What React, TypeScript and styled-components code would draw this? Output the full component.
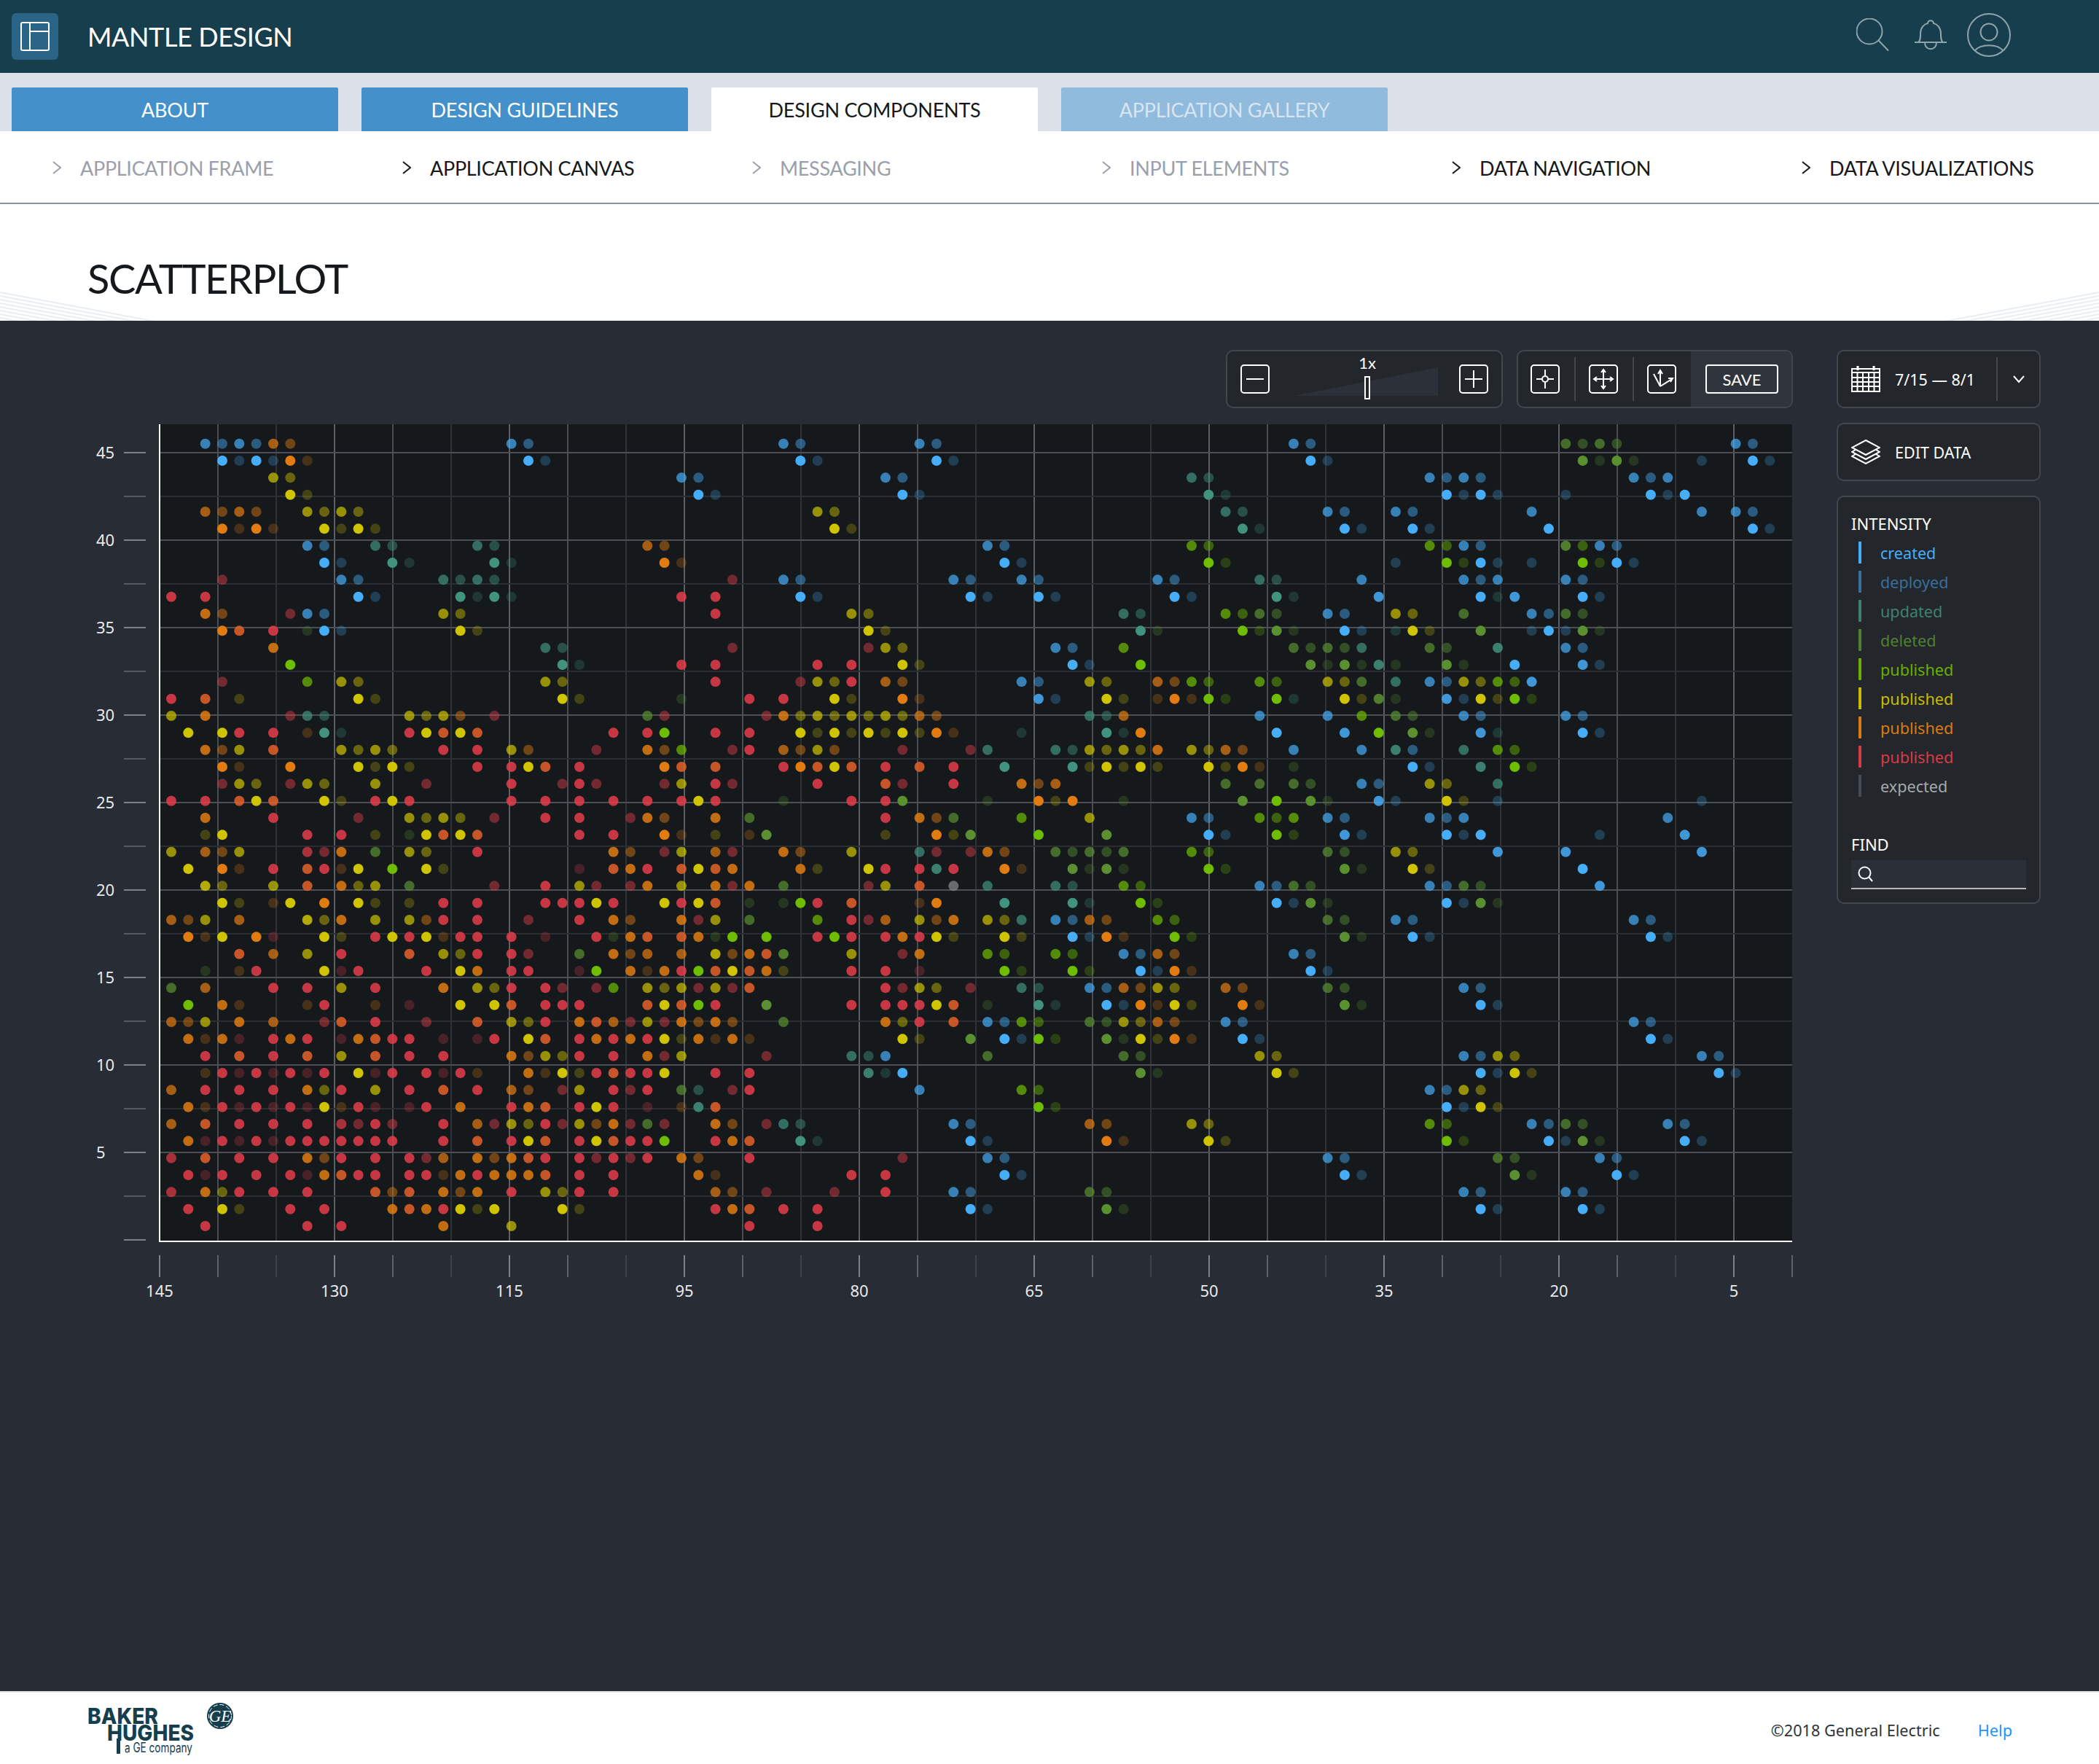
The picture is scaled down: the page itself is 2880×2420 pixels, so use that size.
import * as React from 'react'
import styled, { createGlobalStyle } from 'styled-components'

const FONT = `Lato, 'Noto Sans', sans-serif`
const BODY_FONT = `'Noto Sans', 'Open Sans', sans-serif`

const GlobalStyle = createGlobalStyle`
  html, body { margin: 0; padding: 0; background: #fff; }
  * { box-sizing: border-box; }
`

const Page = styled.div`
  width: 2880px;
  height: 2420px;
  display: flex;
  flex-direction: column;
  font-family: ${FONT};
`

const Header = styled.header`
  height: 100px;
  flex: none;
  display: flex;
  align-items: center;
  padding: 0 121px 0 16px;
  background: #163e4d;
`

const LogoBox = styled.div`
  width: 64px;
  height: 64px;
  border-radius: 6px;
  background: #2a6587;
  display: flex;
  align-items: center;
  justify-content: center;
`

const AppTitle = styled.h1`
  margin: 0 0 0 40px;
  font-size: 36px;
  font-weight: 400;
  letter-spacing: -0.4px;
  color: #fff;
`

const HeaderIcons = styled.div`
  margin-left: auto;
  margin-bottom: 4px;
  display: flex;
  align-items: center;
`

const HeaderIcon = styled.svg<{ $left: number }>`
  display: block;
  margin-left: ${p => p.$left}px;
  fill: none;
  stroke: #8fa4ab;
  stroke-width: 2;
`

const TabBar = styled.nav`
  height: 80px;
  flex: none;
  display: flex;
  align-items: flex-end;
  gap: 32px;
  padding-left: 16px;
  background: #dce0e8;
`

const Tab = styled.div<{ $kind: 'normal' | 'active' | 'muted' }>`
  width: 448px;
  height: 60px;
  border-radius: 2px 2px 0 0;
  display: flex;
  align-items: center;
  justify-content: center;
  font-size: 27px;
  letter-spacing: -0.25px;
  background: ${p => (p.$kind === 'active' ? '#fff' : p.$kind === 'muted' ? '#90bbdd' : '#4390ca')};
  color: ${p => (p.$kind === 'active' ? '#15191c' : p.$kind === 'muted' ? '#d6e5f1' : '#fff')};
`

const SubNav = styled.div`
  height: 100px;
  flex: none;
  display: grid;
  grid-template-columns: repeat(6, 480px);
  border-bottom: 2px solid #8d929c;
  background: #fff;
`

const SubNavItem = styled.div<{ $on: boolean }>`
  display: flex;
  align-items: center;
  padding: 2px 0 0 72px;
  font-size: 27px;
  letter-spacing: -0.3px;
  color: ${p => (p.$on ? '#15191c' : '#9aa0ab')};
`

const Chevron = styled.svg`
  flex: none;
  margin-right: 26px;
  fill: none;
  stroke: currentColor;
  stroke-width: 2;
`

const TitleBar = styled.div`
  position: relative;
  height: 160px;
  flex: none;
  padding: 60px 0 0 120px;
  background: #fff;
  overflow: hidden;
`

const PageTitle = styled.h2`
  margin: 0;
  font-size: 56px;
  line-height: 84px;
  font-weight: 400;
  letter-spacing: -1.36px;
  color: #15191c;
`

const Fan = styled.svg<{ $flip?: boolean }>`
  position: absolute;
  bottom: 0;
  ${p => (p.$flip ? 'right: 0; transform: scaleX(-1);' : 'left: 0;')}
  stroke: #e9edf3;
  stroke-width: 2;
`

const Main = styled.main`
  flex: 1;
  display: flex;
  gap: 60px;
  padding: 40px 0 0 120px;
  background: #282c35;
`

const ChartColumn = styled.div`
  width: 2340px;
  flex: none;
`

const Toolbar = styled.div`
  height: 80px;
  display: flex;
  justify-content: flex-end;
  gap: 19px;
`

const Panel = styled.div`
  border: 2px solid #42464f;
  border-radius: 10px;
  background: #23272b;
`

const ZoomPanel = styled(Panel)`
  width: 380px;
  display: flex;
  align-items: center;
  padding: 0 18px;
`

const SquareButton = styled.div`
  width: 40px;
  height: 40px;
  flex: none;
  border: 2px solid #fff;
  border-radius: 5px;
  display: flex;
  align-items: center;
  justify-content: center;
`

const ButtonIcon = styled.svg`
  display: block;
  fill: none;
  stroke: #fff;
  stroke-width: 2;
`

const SliderBox = styled.div`
  position: relative;
  flex: 1;
  height: 76px;
`

const SliderWedge = styled.div`
  position: absolute;
  left: 33px;
  top: 22px;
  width: 198px;
  height: 39px;
  background: #2c3039;
  clip-path: polygon(0 100%, 100% 0, 100% 100%);
`

const SliderHandle = styled.div`
  position: absolute;
  left: 130px;
  top: 34px;
  width: 8px;
  height: 32px;
  border: 2px solid #fff;
  background: #23272b;
`

const SliderLabel = styled.span`
  position: absolute;
  left: 114px;
  top: 2px;
  width: 40px;
  text-align: center;
  font-size: 22px;
  line-height: 28px;
  color: #fff;
`

const ToolPanel = styled(Panel)`
  width: 379px;
  display: flex;
  overflow: hidden;
`

const ToolGroup = styled.div`
  display: flex;
  align-items: center;
  padding-left: 17px;
  width: 237px;
  flex: none;
`

const ToolDivider = styled.div`
  width: 2px;
  height: 60px;
  margin: 0 18px 0 20px;
  background: #42464f;
`

const SaveArea = styled.div`
  flex: 1;
  display: flex;
  align-items: center;
  padding-left: 20px;
  background: #30343c;
`

const SaveButton = styled.div`
  width: 100px;
  height: 40px;
  border: 2px solid #fff;
  border-radius: 4px;
  display: flex;
  align-items: center;
  justify-content: center;
  font-size: 22px;
  color: #fff;
`

const ChartSvg = styled.svg`
  display: block;
  margin-top: 22px;
  overflow: visible;
`

const AxisLabel = styled.text`
  font-family: ${BODY_FONT};
  font-size: 22px;
  fill: #e8eaec;
`

const SideColumn = styled.aside`
  width: 280px;
  flex: none;
  display: flex;
  flex-direction: column;
  gap: 20px;
`

const ActionPanel = styled(Panel)`
  height: 80px;
  display: flex;
  align-items: center;
  padding-left: 18px;
  font-family: ${BODY_FONT};
  font-size: 21.5px;
  color: #fff;
`

const ActionText = styled.span`
  margin-left: 20px;
`

const DateDivider = styled.div`
  width: 2px;
  height: 60px;
  margin-left: auto;
  background: #42464f;
`

const DateCaret = styled.div`
  width: 57px;
  display: flex;
  justify-content: center;
`

const IntensityPanel = styled(Panel)`
  padding: 21px 18px 18px;
  font-family: ${BODY_FONT};
`

const SectionLabel = styled.div`
  font-size: 22px;
  line-height: 30px;
  color: #fff;
`

const LegendList = styled.div`
  margin-top: 10px;
  display: flex;
  flex-direction: column;
  gap: 10px;
  padding-left: 10px;
`

const LegendRow = styled.div<{ $color: string; $text: string }>`
  height: 30px;
  display: flex;
  align-items: center;
  font-size: 21.6px;
  color: ${p => p.$text};
  &::before {
    content: '';
    width: 4px;
    height: 30px;
    margin-right: 26px;
    background: ${p => p.$color};
  }
`

const FindLabel = styled(SectionLabel)`
  margin-top: 50px;
`

const FindInput = styled.div`
  margin-top: 7px;
  height: 40px;
  padding-left: 9px;
  display: flex;
  align-items: center;
  background: #2b2f38;
  border-bottom: 2px solid #b5b7bb;
`

const Footer = styled.footer`
  height: 100px;
  flex: none;
  display: flex;
  align-items: center;
  justify-content: space-between;
  padding: 4px 119px 0 120px;
  border-top: 2px solid #dfe3e6;
  background: #fff;
  font-family: ${BODY_FONT};
  font-size: 21.7px;
  color: #2f343b;
`

const FooterLinks = styled.div`
  display: flex;
  gap: 52px;
`

const HelpLink = styled.a`
  color: #1e96f0;
`

const LogoText = styled.text<{ $size: number; $weight: number }>`
  font-family: Inter, 'Open Sans', sans-serif;
  font-size: ${p => p.$size}px;
  font-weight: ${p => p.$weight};
  fill: #163e4d;
`

const GEText = styled.text`
  font-family: 'Liberation Serif', serif;
  font-style: italic;
  font-size: 23px;
  fill: #fff;
`

// one dot per token: column + colour letter, lowercase takes its alpha from the row/col parity
const DOT_ROWS = [
  '2b3b4b5b6o7o 20b21b 36b37b 44b45b 66b67b 82g83g84g85g 92b93b',
  '3b4b5b6b7o8o 21b22b 37b38b 45b46b 67b68b 83g84g85g86g 90b 93b94b',
  '6y7y 30b31b 42b43b 60t61t 74b75b76b77b 86b87b88b',
  '7y8y 31b32b 43b44b 61t62t 75b76b77b78b 82b 87b88b89b',
  '2o3o4o5o 8y9y10y11y 38y39y 62t63t 68b69b 72b73b 80b 90b 92b93b',
  '3o4o5o6o 9y10y11y12y 39y40y 63t64t 69b70b 73b74b 81b 93b94b',
  '8b9b 12t13t 18t19t 28o29o 48b49b 60l61l 74l75l 76b77b 82G83l 84b85b',
  '9b10b 13t14t 19t20t 29o30o 49b50b 61l62l 72b 75l76l 77b78b 80b 83l84l 85b86b',
  '3r 10b11b 16t17t18t19t 33r 36b37b 46b47b 50b51b 58b59b 64t65t 70b 76b77b78b 82b83b',
  '0R 2R 11b12b 17t18t19t20t 30R 32R 37b38b 47b 48b 51b52b 59b60b 65t66t 71B 77b78t79B 83b84b',
  '2O3o 7r 8b9b 16y17y 32R 40y41y 56t57t 62l63l 64g65g 68b69b 72y73y 76g 80b81b 82g83g',
  '3o4E6R 8g9b10b 17y18y 41y42y 57t58g 63l64l 65g66g 69b70b 72t 73y74y 77g 80b81b 82b83g84g',
  '6O 22t23t 33r 41r42y43y 52b53b 56l 66g67g68g69g 70t 74g75g 78T 82b83b',
  '7l 23t24t 30R32R 38R40R 43y44y 53b54b 57l 67g68g69g70g71T 72g 75g76g 79b 83B84b',
  '3r 8l 10y11y 22y23y 32R 37r 38y39y 40R 42o43o 50b51b 54y55y 58o59o 60l61l 64l65l 68y69y 70g 72t 74b75b 76y77y 78l79l 80B',
  '0R 2E 4y 11y12y 23y24y 30g 34R 36R 39y40y 43o44o 51B52b 55y56y 58o59o60o 61l62l 65l66t 69y70y 71G72g 75B76b 77y78y 79l80l',
  '0y 2O 7r 8t9t 14y15y16y17o 19r 28g29r 35r36O37y38y39y40y41y42y43y44o45o 54t55t56o 64b 68b 70l 72g73g 76b77b 82b83b',
  '1y 3y 4R 6R 8o 9t10t 14R15y16E17y18E 26R 28R29l 32R 34R 37y38y39y40y41y42y43y44y45o46o 50t 55t56t57o 65b 69B 71l 73g74g 77B78t 83b84b',
  '2O3o4y 6E 10y11y12y13y 16R 18R 20y21o 25r 28O29o30l 33r34R 36o37o38y39o 43r 47r 48t 52t53t 54y55y56y57y58O 60y61y62o63o 66b 70b 72T73b 76t 78l79l',
  '3o4o 7o 11y12y13y14y 18R 20R21y22E 24R 29o30E 32E 36R37o38E39y40E 42R 44E 46R 49t 53t54y 55y56y57y58y 61y62y63o64o 66g 73b74b 77T 79l80l',
  '3r4y5y 7r8y9y 12y 15r 20R 23r24R25r 29r30y 32R33r 38R 42E43r 46R 50O51o52o 62g 64g 66g67g 70b71b 74y75y 78t',
  '0R 2R 4E5y6E 9y10y 12R13y14R 20R 22R 24R 26R 28R 30R31y32R 36g 40R 42R43g 48g 51o52y53o 56g 63g 65l 67g68g 71B72b 75y76y 78b 90b',
  '2O 6R 11r 14y15y16y17y 19r 22R 24R 27r28O29o 32O 34g 42R 44O45o46g 50l 54y 60b61b 64l65l66l 68b69b 74b75b76b 88b',
  '2y3y 8R 10R 12y 14g15y16E17y18E 24R 26R 29o30o 32y 34o35g 42y 45o46y47g 51l 55g 61b62b 65l66l 69B70b 75b76b77b 84b 89B',
  '0y 2o3o4y 8r9r10O 12g 14y15y 18R 26O27o 29r30y 32o33r 36O37o 40y 44t45r 47r 48O49o 52g53g54g55g56g 60l61l 68g69g 72y73y 78B 82B 90B',
  '1y 3o4o 6R 8E9R10o11y 13l 15y16y 24r 26E27O28R 30E31y32E33O 37O38y 41y42R 44R45T46R 49o50o 53g54g55g56g 61l62l 69g70g 73y74y 83b',
  '2Y3y 6y 8E 10O11y12y 14g 19r 22R 24y25r 27r28O 30y 32O33r34O 36g 41r42y 44E 46x 48t 52t53t 56l57l 64b65b66g67g 74b75b76g77g 84B',
  '3y4y 6o7y 9o 11y12y 14y 16R 18R 22R23R24R25y26R 29y30R31y32E 34g 36g37l38R 40E 44o45o 49t 53t54t 57l58l 65b66b67g68g 75b76b77g78g',
  '0o1o2y 4o 8Y9y10O 12y 14y15o16R 18R 21r 24R 26O27o 30O31r32y 34g 38l 40R41r42o 44y45o46O 48y49y50t 52b53b54o55o 58l59l 68g69g 72b73b 86b87b',
  '1o2o3y 5o6r 9y10y 12R13y14R15y16o17R18R 20R 22r 25R26g27O28E 30E31O32g33l 35l 38R39l40R 42R43O44R45y46y 49y50y 53b54b55o56o 59l60l 69g70g 73b74b 87b88b',
  '4E 6o 8y 10R 14E 16y17y18R 20R21r 24g 26O27o28o 30o 32Y33o34O35E36G 40y 43r44O 48l49l 52l53l 56b57b58o59o 66b67b',
  '2g 4o5R 9y10r11R 15R 17y18O 20R21R 24r25l 27O28o29O30R31l32E33y34E35O36y 40R 42R 44r 49l50l 53l54l 57b58b59o60o 67b68b',
  '0g 2o 6R 8R 10y 12R 16O 18y19y20R 22R23r 25r26l 28y29y30y31r32y33r34E 42R43r44y45y 47r 50t51t 54b55b56o57o58y59y 62o63o 68g69g 76b77b',
  '1l 3O4o 8o9R 12o 14r 17y 19y20E 22R23R24R 28E29y30E31l32R 35g 40R 42R43R44R45y46E 48g 51t52t 55b56b57o58o59y60y 63o64o 69g70g 77b78b',
  '0o1o2y 4O 6o 9r10E 12R 15r 18E 20y21y22R 24O25E26o27r28y29r30O31o32O33o 36g 42O43y44R 46E 48b49b50l51l 54g55g56y57y58o59o 62b63b 86b87b',
  '1O2o3O4r 6R7O8R 10r11O12E13R14R 16r 18r19R 21y22E 24R25O26R27O28R29y30y31O32o33O34o 43y44y 47g 49b50b51l52l 55g56g57y58y59o60o 63b64b 87b88b',
  '2R 4E 6R 8E 10y 12E 14R 16R 20O21o22y23y24R 26R 28O29r30y 35r 40t41t42b 48g 56g57g 64y65y 76b77b78y79y 90b91b',
  '2o3R4r5R6r7R8r9R 11y12r13R 15R16r17R18o 21O22o23y24y25R26E27R28R29y 32R 34R 41T42t43b 57g58g 65y66y 77b78b79y80y 91b92b',
  '0o 2R 4R 6R 8O9y10R 12y 14R 16E 18R 20o21o 23r24y 26R27r28R 30g31t 33r34R 44b 50l51l 74b75b76y77y',
  '1O2o3R4r5R6r7R8r9y10o11R12r 14r15R 17O 20R21O22E 24R25y26R 28r 30o31T32E 51l52l 75b76b77y78y',
  '0o 2E 4R 6R 8R 10r11r12R13r 16R 18o19r20y21y22R23r24y25o26O27r28g29r 32O33o 35r36t37t 46b47b 54o55o 60y61y 74l75l 80b81b82g83g 88b89b',
  '1O2r3R4r5R6r7R8R9R10R11R12R13R 16R 18E 20R21y22E 24R25y26E27R28R29l 32R33O34E 37t38t 47b 48b 55o56o 61y62y 75l76l 81b82b83g84g 89b90b',
  '0r 2E 4R 6R 8O9o10R 12R 14R15r16o 18O19o20O21E22R 24R25r26R27r28R 30O31o 34R 43r 48b49b 68b69b 78g79g 84b85b',
  '1R2r3R 5R 7R8r9O10E11R12R 14R15R16o17O18R19O20O21O22E 24R 26R 31O32o 40R 42R 49b50b 69b70b 79g80g 85b86b',
  '0r 2O3y4R 6R 8R 12E13o14E 16O17o18O 20R 22y23y24R 26R 32o33o 35r 39r 42R 46b47b 54g55g 76b77b 82b83b',
  '1R 3y4y 7R 9R 13O14E15O16R17y18y19y 23y24y 32R33O34E 36R 38R 47b 48b 55g56g 77b78b 83b84b',
  '2R 8R 10R 16O 20y 34R 38R',
]

const DOT_COLORS: Record<string, string> = {
  b: '#46aef8',
  t: '#41927f',
  g: '#5a9030',
  l: '#6fbd00',
  y: '#d0c400',
  o: '#e27c10',
  e: '#e5622a',
  r: '#e63d4a',
  x: '#8a8c8c',
}

const parseDots = () => {
  const dots: { col: number; row: number; color: string; alpha: number }[] = []
  DOT_ROWS.forEach((line, row) => {
    for (const m of line.matchAll(/(\d+)([a-zA-Z])/g)) {
      const col = Number(m[1])
      const upper = m[2] !== m[2].toLowerCase()
      let alpha = 0.85
      if (!upper) {
        if (row % 2 === 0) alpha = col % 2 === 0 ? 0.7 : 0.45
        else alpha = col % 2 === 1 ? 1 : 0.25
      }
      dots.push({ col, row, color: DOT_COLORS[m[2].toLowerCase()], alpha })
    }
  })
  return dots
}

const PLOT_X = 99
const PLOT_W = 2240
const PLOT_H = 1120

const VLINE = ['#5c5f64', '#4a4d52', '#2e3236']
const XTICK = ['#7e8189', '#5f6269', '#3f424a']

const Chart: React.FC = () => {
  const dots = React.useMemo(parseDots, [])
  const xLabels = [145, 130, 115, 95, 80, 65, 50, 35, 20, 5]
  const yLabels = [45, 40, 35, 30, 25, 20, 15, 10, 5]
  return (
    <ChartSvg width={2340} height={1220} viewBox="0 0 2340 1220">
      <rect x={PLOT_X} y={0} width={PLOT_W} height={PLOT_H} fill="#15191c" />
      {Array.from(Array(29), (_, i) => (
        <React.Fragment key={i}>
          {i > 0 && i < 28 && (
            <rect x={PLOT_X + i * 80 - 1} y={0} width={2} height={PLOT_H} fill={VLINE[i % 3]} />
          )}
          <rect x={PLOT_X + i * 80 - 1} y={1140} width={2} height={30} fill={XTICK[i % 3]} />
        </React.Fragment>
      ))}
      {Array.from(Array(19), (_, i) => {
        const y = 38 + i * 60
        const strong = i % 2 === 0
        return (
          <React.Fragment key={i}>
            {i < 18 && (
              <rect x={PLOT_X} y={y} width={PLOT_W} height={2} fill={strong ? '#4c4f54' : '#2a2e32'} />
            )}
            <rect x={50} y={y} width={30} height={2} fill={strong ? '#7e8189' : '#55585f'} />
          </React.Fragment>
        )
      })}
      {dots.map((d, i) => (
        <circle
          key={i}
          cx={115 + d.col * 23.333}
          cy={26.7 + d.row * 23.333}
          r={7}
          fill={d.color}
          opacity={d.alpha}
        />
      ))}
      <rect x={98} y={0} width={2} height={PLOT_H + 2} fill="#fff" />
      <rect x={98} y={PLOT_H} width={PLOT_W + 1} height={2} fill="#fff" />
      {yLabels.map((v, i) => (
        <AxisLabel key={v} x={12} y={47 + i * 120}>
          {v}
        </AxisLabel>
      ))}
      {xLabels.map((v, i) => (
        <AxisLabel key={v} x={PLOT_X + i * 240} y={1197} textAnchor="middle">
          {v}
        </AxisLabel>
      ))}
    </ChartSvg>
  )
}

const Plus = () => (
  <ButtonIcon width={36} height={36} viewBox="0 0 36 36">
    <path d="M6 18H30M18 6V30" />
  </ButtonIcon>
)

const LEGEND = [
  { label: 'created', color: '#46aef8', text: '#46aef8' },
  { label: 'deployed', color: '#366f9c', text: '#366f9c' },
  { label: 'updated', color: '#3e8170', text: '#3e8170' },
  { label: 'deleted', color: '#4f8030', text: '#4f8030' },
  { label: 'published', color: '#6aae00', text: '#6aae00' },
  { label: 'published', color: '#c9bb00', text: '#c9bb00' },
  { label: 'published', color: '#dc7a12', text: '#dc7a12' },
  { label: 'published', color: '#d93a46', text: '#d93a46' },
  { label: 'expected', color: '#474b55', text: '#a4a7ad' },
]

const SUBNAV = [
  { label: 'APPLICATION FRAME', on: false },
  { label: 'APPLICATION CANVAS', on: true },
  { label: 'MESSAGING', on: false },
  { label: 'INPUT ELEMENTS', on: false },
  { label: 'DATA NAVIGATION', on: true },
  { label: 'DATA VISUALIZATIONS', on: true },
]

const FanLines: React.FC<{ flip?: boolean }> = ({ flip }) => (
  <Fan $flip={flip} width={215} height={40} viewBox="0 0 215 40">
    {Array.from(Array(9), (_, k) => (
      <line key={k} x1={0} y1={k * 5 + 1} x2={215} y2={k * 5 + 1 + 40.4} />
    ))}
  </Fan>
)

export default function App() {
  return (
    <Page>
      <GlobalStyle />
      <Header>
        <LogoBox>
          <svg width={40} height={42} viewBox="0 0 40 42" fill="none" stroke="#fff" strokeWidth={2}>
            <rect x={1} y={2} width={38} height={38} rx={2} />
            <path d="M13 2V40M13 14H39" />
          </svg>
        </LogoBox>
        <AppTitle>MANTLE DESIGN</AppTitle>
        <HeaderIcons>
          <HeaderIcon $left={0} width={46} height={46} viewBox="0 0 46 46">
            <circle cx={18} cy={18} r={17.5} />
            <path d="M30.5 30.5L44 44.5" />
          </HeaderIcon>
          <HeaderIcon $left={33} width={46} height={46} viewBox="0 0 46 46">
            <path d="M1 33H45M6 33C9 31 9 27 9 21C9 13 14 8 19 7C19.5 2 26.5 2 27 7C32 8 37 13 37 21C37 27 37 31 40 33" />
            <path d="M15 33.5C15 45 31 45 31 33.5" />
          </HeaderIcon>
          <HeaderIcon $left={27} width={60} height={60} viewBox="0 0 60 60">
            <circle cx={30} cy={30} r={29} />
            <circle cx={30} cy={26} r={11.5} />
            <path d="M11 51C19 42 41 42 49 51" />
          </HeaderIcon>
        </HeaderIcons>
      </Header>

      <TabBar>
        <Tab $kind="normal">ABOUT</Tab>
        <Tab $kind="normal">DESIGN GUIDELINES</Tab>
        <Tab $kind="active">DESIGN COMPONENTS</Tab>
        <Tab $kind="muted">APPLICATION GALLERY</Tab>
      </TabBar>

      <SubNav>
        {SUBNAV.map(item => (
          <SubNavItem key={item.label} $on={item.on}>
            <Chevron width={12} height={18} viewBox="0 0 12 18">
              <path d="M1 1L11 9L1 17" />
            </Chevron>
            {item.label}
          </SubNavItem>
        ))}
      </SubNav>

      <TitleBar>
        <FanLines />
        <FanLines flip />
        <PageTitle>SCATTERPLOT</PageTitle>
      </TitleBar>

      <Main>
        <ChartColumn>
          <Toolbar>
            <ZoomPanel>
              <SquareButton>
                <ButtonIcon width={36} height={36} viewBox="0 0 36 36">
                  <path d="M6 18H30" />
                </ButtonIcon>
              </SquareButton>
              <SliderBox>
                <SliderLabel>1x</SliderLabel>
                <SliderWedge />
                <SliderHandle />
              </SliderBox>
              <SquareButton>
                <Plus />
              </SquareButton>
            </ZoomPanel>
            <ToolPanel>
              <ToolGroup>
                <SquareButton>
                  <ButtonIcon width={36} height={36} viewBox="0 0 36 36">
                    <circle cx={18} cy={18} r={4} />
                    <path d="M18 5V14M18 22V31M6 18H14M22 18H30" />
                  </ButtonIcon>
                </SquareButton>
                <ToolDivider />
                <SquareButton>
                  <ButtonIcon width={36} height={36} viewBox="0 0 36 36">
                    <path d="M18 6V30M6 18H30M15 9L18 5L21 9M15 27L18 31L21 27M9 15L5 18L9 21M27 15L31 18L27 21" />
                  </ButtonIcon>
                </SquareButton>
                <ToolDivider />
                <SquareButton>
                  <ButtonIcon width={36} height={36} viewBox="0 0 36 36">
                    <path d="M16 28V7M13 11L16 6L19 11M16 28L7 11M16 28L32 18M27 17L33 17L30 22" />
                  </ButtonIcon>
                </SquareButton>
              </ToolGroup>
              <SaveArea>
                <SaveButton>SAVE</SaveButton>
              </SaveArea>
            </ToolPanel>
          </Toolbar>
          <Chart />
        </ChartColumn>

        <SideColumn>
          <ActionPanel>
            <svg width={40} height={36} viewBox="0 0 40 36" fill="none" stroke="#fff" strokeWidth={2}>
              <rect x={1} y={4} width={38} height={31} />
              <path d="M0 9H40M1 16H39M1 22H39M1 28H39M8.5 9V35M16 9V35M24 9V35M31.5 9V35" />
              <path d="M9 0V6M31 0V6" strokeWidth={3} />
            </svg>
            <ActionText>7/15 — 8/1</ActionText>
            <DateDivider />
            <DateCaret>
              <svg width={16} height={12} viewBox="0 0 16 12" fill="none" stroke="#fff" strokeWidth={2}>
                <path d="M1 2L8 10L15 2" />
              </svg>
            </DateCaret>
          </ActionPanel>
          <ActionPanel>
            <svg width={40} height={34} viewBox="0 0 40 34" fill="none" stroke="#fff" strokeWidth={2}>
              <path d="M20 1L39 11L20 21L1 11Z" />
              <path d="M6 14L1 17L20 27L39 17L34 14" />
              <path d="M6 20L1 23L20 33L39 23L34 20" />
            </svg>
            <ActionText>EDIT DATA</ActionText>
          </ActionPanel>
          <IntensityPanel>
            <SectionLabel>INTENSITY</SectionLabel>
            <LegendList>
              {LEGEND.map((l, i) => (
                <LegendRow key={i} $color={l.color} $text={l.text}>
                  {l.label}
                </LegendRow>
              ))}
            </LegendList>
            <FindLabel>FIND</FindLabel>
            <FindInput>
              <svg width={22} height={22} viewBox="0 0 22 22" fill="none" stroke="#fff" strokeWidth={2}>
                <circle cx={9.5} cy={9.5} r={8} />
                <path d="M15 15L20 21" />
              </svg>
            </FindInput>
          </IntensityPanel>
        </SideColumn>
      </Main>

      <Footer>
        <svg width={200} height={80} viewBox="0 0 200 80">
          <LogoText $size={30} $weight={800} x={0} y={32} textLength={97} lengthAdjust="spacingAndGlyphs">
            BAKER
          </LogoText>
          <LogoText $size={30} $weight={800} x={27} y={55} textLength={119} lengthAdjust="spacingAndGlyphs">
            HUGHES
          </LogoText>
          <rect x={40} y={52} width={5} height={21} fill="#163e4d" />
          <LogoText $size={18} $weight={400} x={51} y={71} textLength={93} lengthAdjust="spacingAndGlyphs">
            a GE company
          </LogoText>
          <circle cx={182} cy={21} r={18} fill="#163e4d" />
          <circle cx={182} cy={21} r={15.5} fill="none" stroke="#fff" strokeWidth={1} strokeDasharray="6 3" />
          <GEText x={182} y={29} textAnchor="middle">
            GE
          </GEText>
        </svg>
        <FooterLinks>
          <span>©2018 General Electric</span>
          <HelpLink>Help</HelpLink>
        </FooterLinks>
      </Footer>
    </Page>
  )
}
